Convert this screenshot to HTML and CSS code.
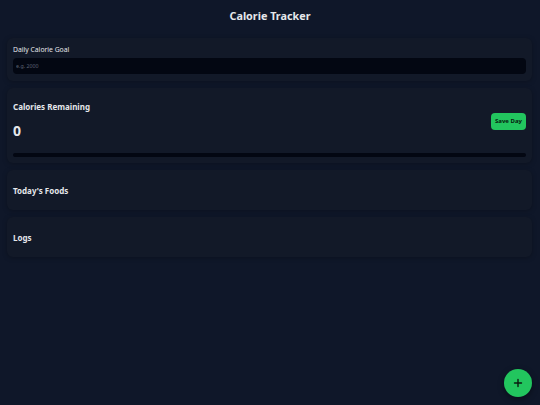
FILE: index.html
```html
<!DOCTYPE html>
<html lang="en">
<head>
<meta charset="utf-8">
<title>Calorie Tracker</title>
<link rel="stylesheet" href="styles.css">
</head>
<body>
<header class="top">
  <h1 class="title">Calorie Tracker</h1>
</header>
<main class="content">
  <section class="card goal-card">
    <label class="label" for="goal">Daily Calorie Goal</label>
    <input class="input" id="goal" type="text" placeholder="e.g. 2000">
  </section>
  <section class="card remain-card">
    <div class="remain-row">
      <div class="remain-info">
        <h2 class="card-title">Calories Remaining</h2>
        <div class="remain-value">0</div>
      </div>
      <button class="save-btn" type="button">Save Day</button>
    </div>
    <div class="progress"><div class="progress-fill"></div></div>
  </section>
  <section class="card plain-card">
    <h2 class="card-title">Today's Foods</h2>
  </section>
  <section class="card plain-card">
    <h2 class="card-title">Logs</h2>
  </section>
</main>
<button class="fab" type="button" aria-label="Add food">
  <svg width="10" height="10" viewBox="0 0 10 10"><path d="M5 1.5v7M1.5 5h7" stroke="#0b1a10" stroke-width="1.4" stroke-linecap="round"/></svg>
</button>
</body>
</html>
```

FILE: styles.css
```css
* { box-sizing: border-box; }
html, body { height: 100%; }
body {
  margin: 0;
  background: #0f1729;
  color: #e5e7eb;
  font-family: "Noto Sans", "Open Sans", sans-serif;
}
.top {
  height: 32px;
  display: flex;
  align-items: center;
  justify-content: center;
}
.title {
  margin: 0;
  font-size: 10.8px;
  font-weight: 700;
  line-height: 16px;
  color: #e5e7eb;
}
.content {
  padding: 6px 8px 0 7px;
  display: flex;
  flex-direction: column;
  gap: 7px;
}
.card {
  background: #121928;
  border-radius: 6px;
  box-shadow: 0 1px 5px rgba(0,0,0,0.25);
}
.goal-card {
  padding: 7px 6px 7px;
  display: flex;
  flex-direction: column;
}
.label {
  font-size: 6.8px;
  line-height: 10px;
  color: #e5e7eb;
}
.input {
  margin-top: 3px;
  height: 16px;
  border: none;
  border-radius: 4px;
  background: #030712;
  color: #e5e7eb;
  padding: 0 3px;
  font-family: inherit;
  font-size: 5.3px;
  outline: none;
}
.input::placeholder { color: #5b6372; }
.remain-card { padding: 13px 6px 6px; }
.remain-row {
  display: flex;
  align-items: center;
  justify-content: space-between;
}
.card-title {
  margin: 0;
  font-size: 8px;
  line-height: 12px;
  font-weight: 700;
  color: #e5e7eb;
}
.remain-value {
  margin-top: 10px;
  font-size: 14px;
  line-height: 16px;
  font-weight: 700;
}
.save-btn {
  margin-top: 2px;
  border: none;
  background: #22c55e;
  color: #06200f;
  font-family: inherit;
  font-weight: 700;
  font-size: 6px;
  border-radius: 4px;
  width: 35px;
  height: 17px;
  padding: 0;
}
.progress {
  margin-top: 14px;
  height: 4px;
  border-radius: 2px;
  background: #030712;
  overflow: hidden;
}
.progress-fill { width: 0; height: 100%; background: #22c55e; }
.plain-card { padding: 15px 6px 13px; }
.fab {
  position: fixed;
  right: 8px;
  bottom: 8px;
  width: 28px;
  height: 28px;
  border-radius: 50%;
  border: none;
  background: #22c55e;
  display: flex;
  align-items: center;
  justify-content: center;
  padding: 0;
  box-shadow: 0 2px 6px rgba(0,0,0,0.4);
}
```
